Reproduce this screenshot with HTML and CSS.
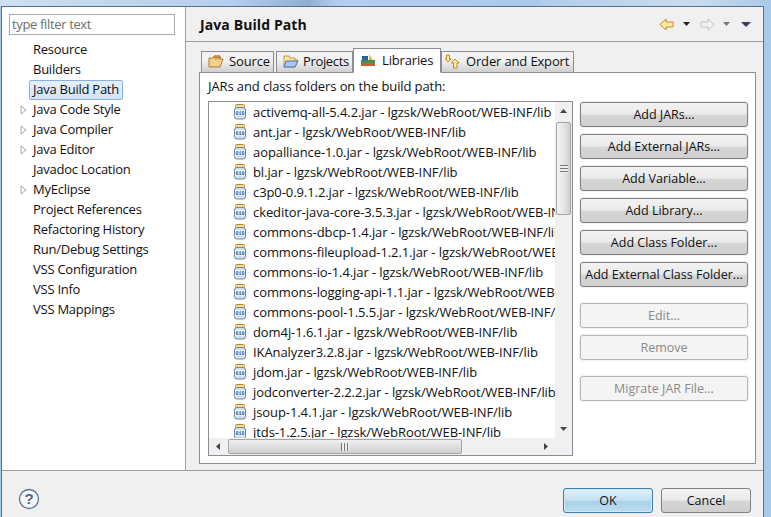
FILE: index.html
```html
<!DOCTYPE html>
<html lang="en">
<head>
<meta charset="utf-8">
<title>Java Build Path</title>
<link rel="stylesheet" href="styles.css">
</head>
<body>
<svg class="defs" width="0" height="0" aria-hidden="true">
  <defs>
    <symbol id="jar" viewBox="0 0 14 16">
      <rect x="2.5" y="0.5" width="9" height="3" rx="1" fill="#f6dc92" stroke="#b98a2c"/>
      <rect x="1.5" y="3.5" width="11" height="11.5" rx="2.5" fill="#d5deeb" stroke="#6f84a8"/>
      <rect x="2" y="6" width="10" height="5.5" fill="#fff"/>
      <text x="7" y="10.6" text-anchor="middle" class="jar-bits">010</text>
    </symbol>
    <symbol id="twisty" viewBox="0 0 7 10">
      <path d="M1 1 L6 5 L1 9 Z" fill="#fff" stroke="#a6a6a6"/>
    </symbol>
  </defs>
</svg>
<div class="desk">
  <div class="strip"></div>
  <div class="window">
    <aside class="side">
      <div class="filter">type filter text</div>
      <ul class="tree">
        <li class="node"><span class="tw"></span><span class="lbl">Resource</span></li>
        <li class="node"><span class="tw"></span><span class="lbl">Builders</span></li>
        <li class="node"><span class="tw"></span><span class="lbl sel">Java Build Path</span></li>
        <li class="node"><span class="tw"><svg width="7" height="10"><use href="#twisty"/></svg></span><span class="lbl">Java Code Style</span></li>
        <li class="node"><span class="tw"><svg width="7" height="10"><use href="#twisty"/></svg></span><span class="lbl">Java Compiler</span></li>
        <li class="node"><span class="tw"><svg width="7" height="10"><use href="#twisty"/></svg></span><span class="lbl">Java Editor</span></li>
        <li class="node"><span class="tw"></span><span class="lbl">Javadoc Location</span></li>
        <li class="node"><span class="tw"><svg width="7" height="10"><use href="#twisty"/></svg></span><span class="lbl">MyEclipse</span></li>
        <li class="node"><span class="tw"></span><span class="lbl">Project References</span></li>
        <li class="node"><span class="tw"></span><span class="lbl">Refactoring History</span></li>
        <li class="node"><span class="tw"></span><span class="lbl">Run/Debug Settings</span></li>
        <li class="node"><span class="tw"></span><span class="lbl">VSS Configuration</span></li>
        <li class="node"><span class="tw"></span><span class="lbl">VSS Info</span></li>
        <li class="node"><span class="tw"></span><span class="lbl">VSS Mappings</span></li>
      </ul>
    </aside>
    <main class="main">
      <header class="head">
        <h1 class="title">Java Build Path</h1>
        <div class="nav">
          <svg width="15" height="13" viewBox="0 0 15 13"><path d="M1 6.5 L7 1 V4 H14 V9 H7 V12 Z" fill="#fde9a8" stroke="#c98a1b"/></svg>
          <svg class="caret c1" width="7" height="4" viewBox="0 0 7 4"><path d="M0 0 H7 L3.5 4 Z" fill="#222"/></svg>
          <svg class="fwd" width="15" height="13" viewBox="0 0 15 13"><path d="M14 6.5 L8 1 V4 H1 V9 H8 V12 Z" fill="#f2f2f2" stroke="#c4c4c4"/></svg>
          <svg class="caret c2" width="7" height="4" viewBox="0 0 7 4"><path d="M0 0 H7 L3.5 4 Z" fill="#777"/></svg>
          <svg class="menu" width="10" height="5" viewBox="0 0 10 5"><path d="M0 0 H10 L5 5 Z" fill="#3d3a66"/></svg>
        </div>
      </header>
      <div class="tabs">
        <div class="tab t-source">
          <svg width="16" height="14" viewBox="0 0 16 14"><path d="M1 4 H5 L6 2 H12 V5 H15 L12 13 H1 Z" fill="#f4cf8f" stroke="#b57a2a"/><path d="M8 1 V6 M11 1 V6 M6 3.5 H13" stroke="#b57a2a" fill="none"/></svg>
          Source
        </div>
        <div class="tab t-projects">
          <svg width="16" height="14" viewBox="0 0 16 14"><path d="M1 2 H6 L7 4 H12 V6 H15 L12 13 H1 Z" fill="#fbe6a6" stroke="#c39a3e"/><path d="M3 7 H15 L12 13 H1 Z" fill="#a9c6ee" stroke="#4a72b5"/></svg>
          Projects
        </div>
        <div class="tab t-libs">
          <svg width="16" height="14" viewBox="0 0 16 14"><rect x="1" y="10" width="14" height="3" fill="#c9602c"/><rect x="1" y="7" width="14" height="3" fill="#3f8f58"/><rect x="2" y="3" width="6" height="4" fill="#2f5f9f"/><path d="M9 1 L13 7 H9 Z" fill="#e8b93b"/></svg>
          Libraries
        </div>
        <div class="tab t-order">
          <svg width="16" height="15" viewBox="0 0 16 15"><path d="M4 1 L7 4 H5.5 V8 H2.5 V4 H1 Z" transform="rotate(180 4 4.5)" fill="#fde9a8" stroke="#c98a1b"/><path d="M11 5 L15 9 H13 V14 H9.5 V9 H7.5 Z" fill="#fde9a8" stroke="#c98a1b"/></svg>
          Order and Export
        </div>
      </div>
      <section class="folder">
        <p class="cap">JARs and class folders on the build path:</p>
        <div class="cols">
          <div class="listbox">
            <div class="list-top">
              <ul class="jars">
                <li class="jar"><svg width="14" height="16"><use href="#jar"/></svg>activemq-all-5.4.2.jar - lgzsk/WebRoot/WEB-INF/lib</li>
                <li class="jar"><svg width="14" height="16"><use href="#jar"/></svg>ant.jar - lgzsk/WebRoot/WEB-INF/lib</li>
                <li class="jar"><svg width="14" height="16"><use href="#jar"/></svg>aopalliance-1.0.jar - lgzsk/WebRoot/WEB-INF/lib</li>
                <li class="jar"><svg width="14" height="16"><use href="#jar"/></svg>bl.jar - lgzsk/WebRoot/WEB-INF/lib</li>
                <li class="jar"><svg width="14" height="16"><use href="#jar"/></svg>c3p0-0.9.1.2.jar - lgzsk/WebRoot/WEB-INF/lib</li>
                <li class="jar"><svg width="14" height="16"><use href="#jar"/></svg>ckeditor-java-core-3.5.3.jar - lgzsk/WebRoot/WEB-INF/lib</li>
                <li class="jar"><svg width="14" height="16"><use href="#jar"/></svg>commons-dbcp-1.4.jar - lgzsk/WebRoot/WEB-INF/lib</li>
                <li class="jar"><svg width="14" height="16"><use href="#jar"/></svg>commons-fileupload-1.2.1.jar - lgzsk/WebRoot/WEB-INF/lib</li>
                <li class="jar"><svg width="14" height="16"><use href="#jar"/></svg>commons-io-1.4.jar - lgzsk/WebRoot/WEB-INF/lib</li>
                <li class="jar"><svg width="14" height="16"><use href="#jar"/></svg>commons-logging-api-1.1.jar - lgzsk/WebRoot/WEB-INF/lib</li>
                <li class="jar"><svg width="14" height="16"><use href="#jar"/></svg>commons-pool-1.5.5.jar - lgzsk/WebRoot/WEB-INF/lib</li>
                <li class="jar"><svg width="14" height="16"><use href="#jar"/></svg>dom4j-1.6.1.jar - lgzsk/WebRoot/WEB-INF/lib</li>
                <li class="jar"><svg width="14" height="16"><use href="#jar"/></svg>IKAnalyzer3.2.8.jar - lgzsk/WebRoot/WEB-INF/lib</li>
                <li class="jar"><svg width="14" height="16"><use href="#jar"/></svg>jdom.jar - lgzsk/WebRoot/WEB-INF/lib</li>
                <li class="jar"><svg width="14" height="16"><use href="#jar"/></svg>jodconverter-2.2.2.jar - lgzsk/WebRoot/WEB-INF/lib</li>
                <li class="jar"><svg width="14" height="16"><use href="#jar"/></svg>jsoup-1.4.1.jar - lgzsk/WebRoot/WEB-INF/lib</li>
                <li class="jar"><svg width="14" height="16"><use href="#jar"/></svg>jtds-1.2.5.jar - lgzsk/WebRoot/WEB-INF/lib</li>
              </ul>
              <div class="vbar">
                <div class="arrow"><svg width="7" height="4" viewBox="0 0 7 4"><path d="M0 4 L3.5 0 L7 4 Z" fill="#444"/></svg></div>
                <div class="vthumb"><span class="grip"></span></div>
                <div class="vtrack"></div>
                <div class="arrow"><svg width="7" height="4" viewBox="0 0 7 4"><path d="M0 0 L3.5 4 L7 0 Z" fill="#444"/></svg></div>
              </div>
            </div>
            <div class="hbar">
              <div class="arrow harrow"><svg width="4" height="7" viewBox="0 0 4 7"><path d="M4 0 L0 3.5 L4 7 Z" fill="#444"/></svg></div>
              <div class="hthumb"><span class="hgrip"></span></div>
              <div class="htrack"></div>
              <div class="arrow harrow"><svg width="4" height="7" viewBox="0 0 4 7"><path d="M0 0 L4 3.5 L0 7 Z" fill="#444"/></svg></div>
              <div class="corner"></div>
            </div>
          </div>
          <div class="btns">
            <div class="btn">Add JARs...</div>
            <div class="btn">Add External JARs...</div>
            <div class="btn">Add Variable...</div>
            <div class="btn">Add Library...</div>
            <div class="btn">Add Class Folder...</div>
            <div class="btn">Add External Class Folder...</div>
            <div class="btn off b-edit">Edit...</div>
            <div class="btn off">Remove</div>
            <div class="btn off b-mig">Migrate JAR File...</div>
          </div>
        </div>
      </section>
    </main>
    <footer class="foot">
      <svg class="help" width="22" height="22" viewBox="0 0 22 22"><circle cx="11" cy="11" r="9.5" fill="#f4f6f9" stroke="#5f7597" stroke-width="1.3"/><text x="11" y="16" text-anchor="middle" class="q">?</text></svg>
      <div class="foot-btns">
        <div class="btn pri">OK</div>
        <div class="btn cancel">Cancel</div>
      </div>
    </footer>
  </div>
</div>
</body>
</html>
```
FILE: styles.css
```css
* { box-sizing: border-box; }
html, body { margin: 0; height: 100%; }
body { font-family: "Open Sans", "Noto Sans", sans-serif; font-size: 12px; color: #111; overflow: hidden; background: #a9c9ea; }
ul { list-style: none; margin: 0; padding: 0; }
.defs { display: block; height: 0; }
.jar-bits { font: 700 5px "Liberation Mono", monospace; fill: #2b4573; }
.q { font: 700 15px "Liberation Sans", sans-serif; fill: #4f6689; }
.desk { width: 771px; height: 517px; display: flex; flex-direction: column; }
.strip { height: 6px; flex: none; background: linear-gradient(90deg, #cfe0f2, #c2d8ee 12%, #b4cfee 30%, #8fb0cf 40%, #b4cfee 44%, #a9c9ea 70%, #a98ea8 67%, #b0cdec 70%, #c9dcef 90%, #a9c9ea); }
.window { width: 763px; height: 511px; margin-left: 1px; display: grid; grid-template-columns: 184px 1fr; grid-template-rows: 1fr 47px; background: #f0f0f0; border: 1px solid #5c6f88; border-bottom: 0; }
.side { background: #fff; border-right: 1px solid #a0a0a0; padding: 7px 0 0 7px; }
.filter { width: 166px; height: 21px; border: 1px solid #a5a9b3; padding-left: 2px; font-size: 13px; line-height: 19px; letter-spacing: -0.35px; color: #6d6d6d; white-space: nowrap; }
.tree { margin-top: 5px; }
.node { display: flex; align-items: center; height: 20px; }
.tw { width: 7px; margin-left: 11px; flex: none; display: flex; }
.lbl { margin-left: 2px; padding: 0 3px; height: 20px; line-height: 17px; font-size: 13px; letter-spacing: -0.25px; border: 1px solid transparent; white-space: nowrap; }
.sel { background: linear-gradient(#e6f0fc, #d2e4fa); border-color: #89aee0; border-radius: 2px; }
.main { display: flex; flex-direction: column; min-width: 0; }
.head { height: 35px; flex: none; display: flex; align-items: center; justify-content: space-between; border-bottom: 1px solid #a0a0a0; padding: 0 12px 0 14px; }
.title { margin: 0; font-size: 14px; font-weight: 700; color: #111; letter-spacing: 0.1px; }
.nav { display: flex; align-items: center; }
.c1 { margin-left: 9px; }
.fwd { margin-left: 10px; }
.c2 { margin-left: 8px; }
.menu { margin-left: 11px; }
.tabs { display: flex; align-items: flex-end; height: 31px; padding-left: 15px; flex: none; margin-bottom: -1px; position: relative; z-index: 1; }
.tab { height: 22px; display: flex; align-items: center; gap: 6px; padding: 0 0 2px 6px; font-size: 13px; letter-spacing: -0.15px; background: linear-gradient(#f2f2f2 40%, #d0d0d0); border: 1px solid #8c8c96; }
.t-source { width: 73px; margin-right: 2px; gap: 5px; }
.t-projects { width: 77px; gap: 4px; letter-spacing: -0.35px; }
.t-libs { width: 88px; height: 25px; padding-bottom: 1px; background: #fff; border-bottom-color: #fff; }
.t-order { width: 133px; padding-left: 2px; }
.folder { width: 557px; height: 392px; margin-left: 13px; background: #fff; border: 1px solid #8c8c96; padding: 0 7px 0 8px; }
.cap { margin: 4px 0 6px; font-size: 13px; line-height: 18px; letter-spacing: -0.1px; }
.cols { display: flex; gap: 7px; }
.listbox { width: 365px; height: 355px; flex: none; border: 1px solid #8c8c96; display: flex; flex-direction: column; }
.list-top { flex: 1; min-height: 0; display: flex; }
.jars { flex: 1; min-width: 0; overflow: hidden; padding: 0 0 0 24px; }
.jar { height: 20px; display: flex; align-items: center; gap: 6px; white-space: nowrap; font-size: 13px; letter-spacing: -0.08px; }
.jar svg { flex: none; }
.vbar { width: 17px; flex: none; background: #f0f0f0; display: flex; flex-direction: column; }
.arrow { height: 18px; flex: none; display: flex; align-items: center; justify-content: center; }
.vthumb { height: 93px; flex: none; margin: 2px 1px 0; border: 1px solid #a5a5a5; border-radius: 2px; background: linear-gradient(90deg, #f4f4f4, #e6e6e6 50%, #cfcfcf); display: flex; align-items: center; justify-content: center; }
.grip { width: 8px; height: 8px; background: linear-gradient(#777 1px, #eee 1px, #eee 3px, #777 3px, #777 4px, #eee 4px, #eee 6px, #777 6px, #777 7px, #eee 7px); }
.vtrack { flex: 1; }
.hbar { height: 17px; flex: none; display: flex; background: #f0f0f0; }
.harrow { width: 18px; height: 17px; }
.hthumb { width: 234px; flex: none; margin: 1px 0 1px 1px; border: 1px solid #a5a5a5; border-radius: 2px; background: linear-gradient(#f0f0f0, #cfcfcf); display: flex; align-items: center; justify-content: center; }
.hgrip { width: 8px; height: 8px; background: linear-gradient(90deg, #777 1px, #eee 1px, #eee 3px, #777 3px, #777 4px, #eee 4px, #eee 6px, #777 6px, #777 7px, #eee 7px); }
.htrack { flex: 1; }
.corner { width: 17px; flex: none; background: #f0f0f0; }
.btns { width: 168px; flex: none; display: flex; flex-direction: column; gap: 7px; margin-top: 1px; }
.btn { height: 25px; flex: none; display: flex; align-items: center; justify-content: center; border: 1px solid #7f7f7f; border-radius: 3px; background: linear-gradient(#f2f2f2 0, #ebebeb 48%, #d6d6d6 52%, #cfcfcf 100%); font-size: 12.5px; color: #111; box-shadow: 0 0 0 1px #f2f2f2; white-space: nowrap; }
.off { background: #f4f4f4; border-color: #b5b5b5; color: #8a8a8a; }
.b-edit { margin-top: 9px; }
.b-mig { margin-top: 9px; }
.foot { grid-column: 1 / 3; border-top: 1px solid #a0a0a0; display: flex; align-items: center; justify-content: space-between; padding: 10px 12px 0 16px; background: #f0f0f0; }
.help { flex: none; }
.foot-btns { display: flex; gap: 8px; margin-top: 3px; }
.pri, .cancel { width: 90px; height: 25px; }
.pri { border-color: #3c7fb1; box-shadow: 0 0 0 1px #cdeafa inset; background: linear-gradient(#e3f2fb, #c2e0f2 50%, #a9d2ea 52%, #bcdcef); }
```
